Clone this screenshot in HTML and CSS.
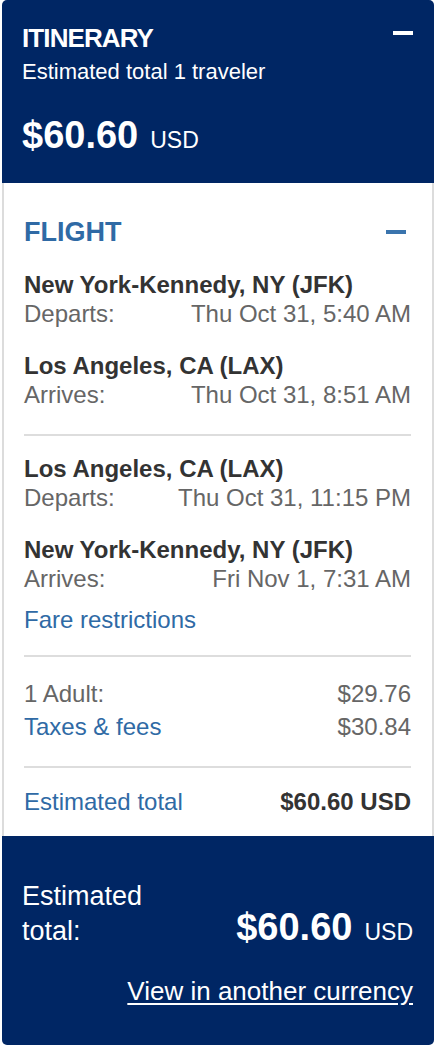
FILE: index.html
```html
<!DOCTYPE html>
<html lang="en">
<head>
<meta charset="utf-8">
<title>Itinerary</title>
<link rel="stylesheet" href="styles.css">
</head>
<body>
<div class="card">
  <header class="head">
    <div class="head-top">
      <h1 class="head-title">ITINERARY</h1>
      <span class="dash dash-white"></span>
    </div>
    <p class="head-sub">Estimated total 1 traveler</p>
    <p class="head-price"><span class="amt">$60.60</span><span class="cur">USD</span></p>
  </header>

  <section class="panel">
    <div class="sec-head">
      <h2 class="sec-title">FLIGHT</h2>
      <span class="dash dash-blue"></span>
    </div>

    <div class="leg leg-first">
      <div class="stop">
        <div class="city">New York-Kennedy, NY (JFK)</div>
        <div class="row"><span>Departs:</span><span>Thu Oct 31, 5:40 AM</span></div>
      </div>
      <div class="stop">
        <div class="city">Los Angeles, CA (LAX)</div>
        <div class="row"><span>Arrives:</span><span>Thu Oct 31, 8:51 AM</span></div>
      </div>
    </div>

    <hr class="rule rule-a">

    <div class="leg">
      <div class="stop">
        <div class="city">Los Angeles, CA (LAX)</div>
        <div class="row"><span>Departs:</span><span>Thu Oct 31, 11:15 PM</span></div>
      </div>
      <div class="stop">
        <div class="city">New York-Kennedy, NY (JFK)</div>
        <div class="row"><span>Arrives:</span><span>Fri Nov 1, 7:31 AM</span></div>
      </div>
      <a class="link fare" href="#">Fare restrictions</a>
    </div>

    <hr class="rule rule-b">

    <div class="prices">
      <div class="row"><span>1 Adult:</span><span>$29.76</span></div>
      <div class="row"><a class="link" href="#">Taxes &amp; fees</a><span>$30.84</span></div>
    </div>

    <hr class="rule rule-c">

    <div class="row total-row">
      <a class="link" href="#">Estimated total</a>
      <span class="total-val">$60.60 USD</span>
    </div>
  </section>

  <footer class="foot">
    <div class="foot-main">
      <div class="foot-label">Estimated<br>total:</div>
      <div class="foot-price"><span class="amt">$60.60</span><span class="cur">USD</span></div>
    </div>
    <a class="foot-link" href="#">View in another currency</a>
  </footer>
</div>
</body>
</html>
```

FILE: styles.css
```css
* { box-sizing: border-box; }

html, body {
  margin: 0;
  padding: 0;
  background: #ffffff;
}

body {
  font-family: "Liberation Sans", Arial, Helvetica, sans-serif;
  color: #333333;
}

.card {
  width: 432px;
  margin: 0 0 0 2px;
  height: 1045px;
  display: flex;
  flex-direction: column;
}

/* ---------- header ---------- */
.head {
  background: #002664;
  color: #ffffff;
  padding: 22px 21px 25px 20px;
  border-radius: 5px 5px 0 0;
  height: 183px;
}

.head-top {
  display: flex;
  justify-content: space-between;
  align-items: flex-start;
}

.head-title {
  margin: 0;
  font-size: 26px;
  line-height: 32px;
  font-weight: 700;
  letter-spacing: -0.9px;
}

.dash {
  display: block;
  width: 20px;
  height: 4px;
}

.dash-white {
  background: #ffffff;
  margin-top: 9px;
}

.head-sub {
  margin: 5px 0 0;
  font-size: 22px;
  line-height: 26px;
}

.head-price {
  margin: 28px 0 0;
  display: flex;
  align-items: baseline;
  line-height: 44px;
}

.amt {
  font-size: 38px;
  font-weight: 700;
}

.cur {
  font-size: 23px;
  margin-left: 12px;
}

/* ---------- white panel ---------- */
.panel {
  flex: 1;
  background: #ffffff;
  border-left: 2px solid #dcdcdc;
  border-right: 2px solid #dcdcdc;
  padding: 33px 21px 0 20px;
  font-size: 24px;
  line-height: 28.5px;
}

.sec-head {
  display: flex;
  justify-content: space-between;
  align-items: center;
  height: 32px;
}

.sec-title {
  margin: 0;
  font-size: 27px;
  line-height: 32px;
  font-weight: 700;
  color: #2f6aa5;
}

.dash-blue {
  background: #3a74ad;
  height: 3.5px;
  margin-right: 5px;
}

.leg {
  display: flex;
  flex-direction: column;
  gap: 24px;
}

.leg-first {
  margin-top: 23px;
}

.city {
  font-weight: 700;
  color: #333333;
}

.row {
  display: flex;
  justify-content: space-between;
  color: #666666;
}

.link {
  color: #2f6aa5;
  text-decoration: none;
}

.fare {
  margin-top: -11px;
}

.rule {
  border: 0;
  height: 2px;
  background: #dddddd;
  margin: 0;
}

.rule-a { margin: 25px 0 19px; }
.rule-b { margin: 20px 0 23px; }
.rule-c { margin: 24px 0 20px; }

.prices {
  display: flex;
  flex-direction: column;
  gap: 5px;
}

.total-val {
  font-weight: 700;
  color: #333333;
}

/* ---------- footer ---------- */
.foot {
  background: #002664;
  color: #ffffff;
  padding: 43px 21px 0 20px;
  border-radius: 0 0 5px 5px;
  height: 209px;
}

.foot-main {
  display: flex;
  justify-content: space-between;
  align-items: last baseline;
}

.foot-label {
  font-size: 27px;
  line-height: 35px;
}

.foot-price {
  display: flex;
  align-items: baseline;
  line-height: 44px;
}

.foot-link {
  display: block;
  margin-top: 22px;
  text-align: right;
  color: #ffffff;
  font-size: 26px;
  line-height: 30px;
  text-decoration: underline;
  text-underline-offset: 3px;
}
```
